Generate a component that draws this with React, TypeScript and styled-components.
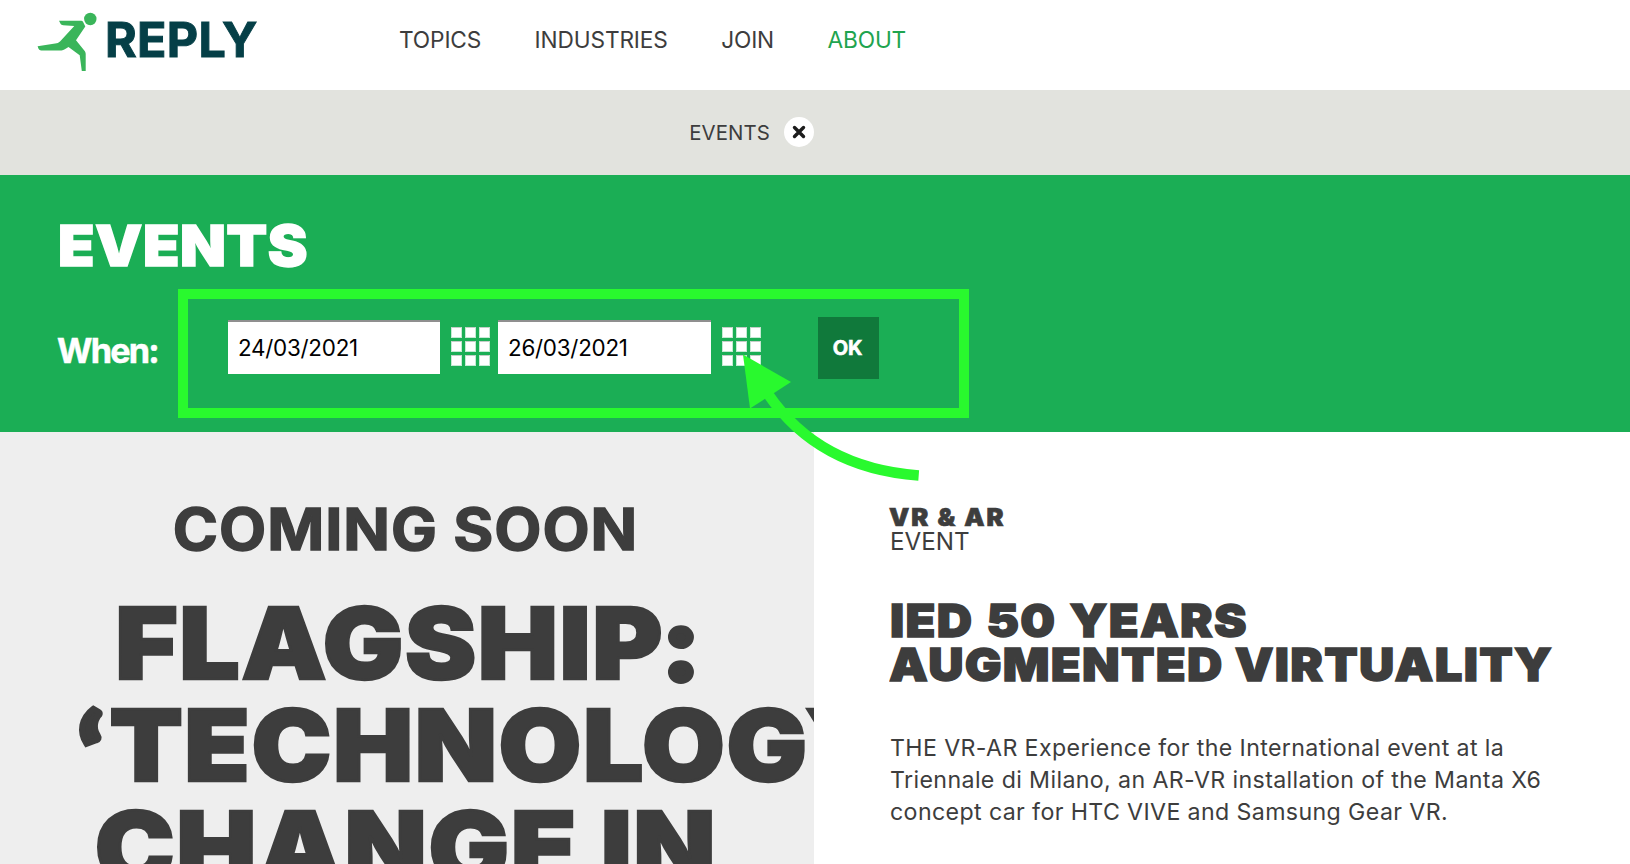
import React from "react";
import styled, { createGlobalStyle } from "styled-components";

const ink = "#3d3d3d";
const green = "#1bae55";
const marker = "#29f92e";

const GlobalStyle = createGlobalStyle`
  *, *::before, *::after { box-sizing: border-box; }
  body {
    margin: 0;
    background: #fff;
    color: ${ink};
    font-family: Inter, "Liberation Sans", sans-serif;
    overflow: hidden;
  }
  h1, h2, h3, p { margin: 0; }
`;

const Page = styled.div`
  width: 1630px;
  height: 864px;
  overflow: hidden;
`;

const Header = styled.header`
  display: flex;
  height: 90px;
  padding-left: 37px;
`;

const Logo = styled.a`
  display: flex;
  width: 362px;
`;

const Runner = styled.svg`
  width: 61px;
  height: 60px;
  margin-top: 12px;
`;

const Wordmark = styled.span`
  margin-left: 7px;
  font: 700 48.4px/80px Inter, sans-serif;
  letter-spacing: 0.3px;
  color: #053f47;
  -webkit-text-stroke: 1px #053f47;
`;

const Nav = styled.nav`
  display: flex;
  gap: 53.4px;
`;

const NavLink = styled.a<{ $active?: boolean }>`
  font-size: 22.7px;
  line-height: 80px;
  letter-spacing: -0.14px;
  color: ${(p) => (p.$active ? "#1fa44f" : ink)};
`;

const FilterBar = styled.div`
  height: 85px;
  background: #e2e3de;
`;

const FilterTag = styled.div`
  display: flex;
  justify-content: flex-end;
  align-items: center;
  gap: 14px;
  width: 814px;
  height: 84px;
  font-size: 20.4px;
  letter-spacing: 0.1px;
`;

const CloseButton = styled.button`
  display: grid;
  place-items: center;
  width: 30px;
  height: 30px;
  padding: 0;
  border: 0;
  border-radius: 50%;
  background: #fff;
`;

const Hero = styled.section`
  position: relative;
  height: 257px;
  padding: 40px 0 0 57px;
  background: ${green};
  color: #fff;
`;

const HeroTitle = styled.h1`
  margin-left: 1px;
  font: 900 56.6px/61px Inter, sans-serif;
  letter-spacing: 0.4px;
  transform: scaleX(1.055);
  transform-origin: left;
  -webkit-text-stroke: 1.4px #fff;
`;

const DateForm = styled.div`
  display: flex;
  margin-top: 41px;
  height: 62px;
`;

const FormLabel = styled.span`
  width: 171px;
  font: 700 34.2px/67px Inter, sans-serif;
  letter-spacing: -1.8px;
  -webkit-text-stroke: 0.5px #fff;
`;

const DateField = styled.input<{ $width: number }>`
  width: ${(p) => p.$width}px;
  height: 54px;
  margin-top: 3px;
  padding: 0 10px 1px;
  border: 0;
  border-top: 2px solid #8f8f8f;
  border-radius: 0;
  background: #fff;
  color: #000;
  font: 400 22.4px Inter, sans-serif;
  letter-spacing: -0.25px;
`;

const PickerButton = styled.button<{ $after: number }>`
  display: grid;
  grid-template-columns: repeat(3, 11px);
  grid-auto-rows: 11px;
  gap: 3px;
  width: 39px;
  height: 39px;
  margin: 10px ${(p) => p.$after}px 0 11px;
  padding: 0;
  border: 0;
  background: none;
`;

const Cell = styled.i`
  background: #fff;
  border: 1px solid rgba(255, 255, 255, 0.75);
  border-top-color: #c4cdc7;
  background-clip: padding-box;
`;

const Submit = styled.button`
  width: 61px;
  height: 62px;
  padding: 0 2px 0 0;
  border: 0;
  background: #10793b;
  color: #fff;
  font: 700 20px/61px Inter, sans-serif;
  letter-spacing: -0.2px;
  -webkit-text-stroke: 0.6px #fff;
`;

const Highlight = styled.div`
  position: absolute;
  left: 178px;
  top: 114px;
  width: 791px;
  height: 129px;
  border: 10px solid ${marker};
`;

const Arrow = styled.svg`
  position: absolute;
  left: 740px;
  top: 175px;
  width: 184px;
  height: 135px;
`;

const Columns = styled.main`
  display: flex;
  height: 432px;
`;

const Feature = styled.section`
  width: 814px;
  padding: 67px 80px 0;
  background: #eee;
  overflow: hidden;
  text-align: center;
  white-space: nowrap;
`;

const Kicker = styled.h3`
  margin-left: -3px;
  font: 700 57.2px/61px Inter, sans-serif;
  letter-spacing: 0.9px;
  transform: scaleX(1.07);
  -webkit-text-stroke: 1.4px ${ink};
`;

const FeatureTitle = styled.h2`
  margin-top: 32px;
  font: 900 99.4px/102px Inter, sans-serif;
  -webkit-text-stroke: 2.6px ${ink};
`;

const TitleLine = styled.span<{ $flush?: boolean }>`
  display: block;
  height: 102px;
  margin-left: ${(p) => (p.$flush ? -2 : -2)}px;
  letter-spacing: ${(p) => (p.$flush ? 1.5 : 1.5)}px;
  transform: scaleX(1.075);
  transform-origin: ${(p) => (p.$flush ? "left" : "center")};
`;

const Colon = styled.span`
  margin-left: 3px;
  font-family: Lato, sans-serif;
  line-height: 0;
  -webkit-text-stroke-width: 8px;
`;

const Quote = styled.span`
  margin-right: 4px;
  font-family: Lato, sans-serif;
  font-size: 106px;
  line-height: 0;
  vertical-align: -12px;
  -webkit-text-stroke-width: 6px;
`;

const Article = styled.article`
  padding: 73px 0 0 76px;
  white-space: nowrap;
`;

const Topic = styled.h3`
  margin-left: -1px;
  font: 900 23.8px/25px Inter, sans-serif;
  letter-spacing: 1.9px;
  transform: scaleX(1.07);
  transform-origin: left;
  -webkit-text-stroke: 0.7px ${ink};
`;

const Kind = styled.p`
  font-size: 24.2px;
  line-height: 24px;
`;

const ArticleTitle = styled.h2`
  margin: 45px 0 0 -1px;
  font: 900 45.8px/44px Inter, sans-serif;
  letter-spacing: 1.2px;
  transform: scaleX(1.067);
  transform-origin: left;
  -webkit-text-stroke: 1.4px ${ink};
`;

const WideWords = styled.span`
  word-spacing: 2px;
  margin-left: 1px;
`;

const Summary = styled.p`
  margin-top: 45px;
  font-size: 23.2px;
  line-height: 32px;
  letter-spacing: 0.37px;
`;

function DatePicker({ value, width, after }: { value: string; width: number; after: number }) {
  return (
    <>
      <DateField defaultValue={value} $width={width} />
      <PickerButton $after={after} aria-label="Open calendar">
        {Array.from({ length: 9 }, (_, i) => (
          <Cell key={i} />
        ))}
      </PickerButton>
    </>
  );
}

export default function App() {
  return (
    <Page>
      <GlobalStyle />
      <Header>
        <Logo>
          <Runner viewBox="37 12 61 60" fill="#3ab55a">
            <circle cx="90.3" cy="19" r="6.2" />
            <path d="M59 20.7H81.2C82 20.7 82.6 21.1 83 21.8L85.3 26.4L76 40.2L84.7 51C85.4 52 85.7 52.8 85.7 54V71H81.8L79.7 55.3L68.5 47L64.8 49.3C63.8 50 62.7 50.4 61.5 50.4H41.2C40 50.4 39 49.6 38.4 48.4L37.6 46.3L55.2 43.6C57.3 43.3 58.6 43 60 41.6L74.3 26L63.2 25.2C62 25.1 61 24.6 60.4 23.6Z" />
          </Runner>
          <Wordmark>REPLY</Wordmark>
        </Logo>
        <Nav>
          <NavLink>TOPICS</NavLink>
          <NavLink>INDUSTRIES</NavLink>
          <NavLink>JOIN</NavLink>
          <NavLink $active>ABOUT</NavLink>
        </Nav>
      </Header>
      <FilterBar>
        <FilterTag>
          EVENTS
          <CloseButton aria-label="Remove filter">
            <svg width="14" height="14" viewBox="0 0 14 14" stroke="#1c1c1c" strokeWidth="3.4" strokeLinecap="round">
              <path d="M2.5 2.5L11.5 11.5M11.5 2.5L2.5 11.5" />
            </svg>
          </CloseButton>
        </FilterTag>
      </FilterBar>
      <Hero>
        <HeroTitle>EVENTS</HeroTitle>
        <DateForm>
          <FormLabel>When:</FormLabel>
          <DatePicker value="24/03/2021" width={212} after={8} />
          <DatePicker value="26/03/2021" width={213} after={57} />
          <Submit>OK</Submit>
        </DateForm>
        <Highlight />
        <Arrow viewBox="740 350 184 135">
          <path d="M768 394C798 438 845 470 918.7 475.5" fill="none" stroke={marker} strokeWidth="10.5" />
          <path d="M743 354.5L791 382L750 408.5Z" fill={marker} />
        </Arrow>
      </Hero>
      <Columns>
        <Feature>
          <Kicker>COMING SOON</Kicker>
          <FeatureTitle>
            <TitleLine>
              FLAGSHIP<Colon>:</Colon>
            </TitleLine>
            <TitleLine $flush>
              <Quote>‘</Quote>TECHNOLOGY
            </TitleLine>
            <TitleLine>CHANGE IN</TitleLine>
          </FeatureTitle>
        </Feature>
        <Article>
          <Topic>VR &amp; AR</Topic>
          <Kind>EVENT</Kind>
          <ArticleTitle>
            <WideWords>IED 50 YEARS</WideWords>
            <br />
            AUGMENTED VIRTUALITY
          </ArticleTitle>
          <Summary>
            THE VR-AR Experience for the International event at la
            <br />
            Triennale di Milano, an AR-VR installation of the Manta X6
            <br />
            concept car for HTC VIVE and Samsung Gear VR.
          </Summary>
        </Article>
      </Columns>
    </Page>
  );
}
